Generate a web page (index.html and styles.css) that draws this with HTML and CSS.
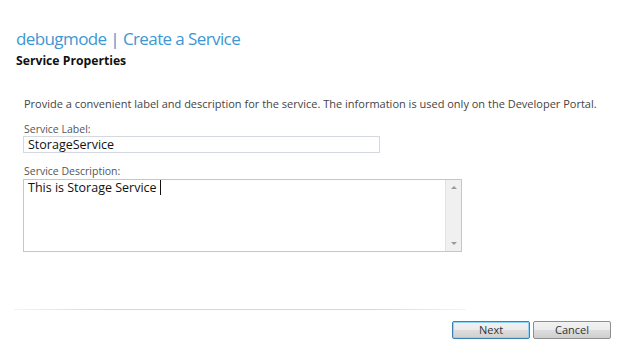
FILE: index.html
```html
<!DOCTYPE html>
<html lang="en">
<head>
    <meta charset="UTF-8">
    <title>debugmode | Create a Service</title>
    <link rel="stylesheet" href="styles.css">
</head>
<body>
    <div class="wizard">
        <h1 class="title">debugmode | Create a Service</h1>
        <h2 class="subtitle">Service Properties</h2>

        <div class="content">
            <p class="intro">Provide a convenient label and description for the service. The information is used only on the Developer Portal.</p>

            <label class="field-label" for="service-label">Service Label:</label>
            <div class="text-input" id="service-label">StorageService</div>

            <label class="field-label" for="service-desc">Service Description:</label>
            <div class="text-area" id="service-desc">
                <div class="text-area-body">This is Storage Service <span class="caret"></span></div>
                <div class="scrollbar">
                    <span class="arrow up"></span>
                    <span class="arrow down"></span>
                </div>
            </div>
        </div>

        <div class="divider"></div>

        <div class="actions">
            <button class="btn btn-primary">Next</button>
            <button class="btn">Cancel</button>
        </div>
    </div>
</body>
</html>
```

FILE: styles.css
```css
body {
    margin: 0;
    background-color: #ffffff;
    font-family: 'Open Sans', 'Noto Sans', sans-serif;
    color: #444444;
}

.wizard {
    width: 624px;
    height: 349px;
}

.title {
    margin: 0;
    padding: 27px 0 0 16px;
    font-family: 'Open Sans', sans-serif;
    font-size: 17px;
    font-weight: normal;
    letter-spacing: -0.6px;
    line-height: 24px;
    color: #3d97d2;
}

.subtitle {
    margin: 0;
    padding: 0 0 0 16px;
    font-size: 12.2px;
    font-weight: bold;
    line-height: 20px;
    color: #111111;
}

.content {
    padding: 25px 0 0 24px;
}

.intro {
    margin: 0 0 10px 0;
    font-size: 11px;
    line-height: 16px;
    color: #444444;
}

.field-label {
    display: block;
    font-size: 10.5px;
    line-height: 14px;
    color: #555555;
}

.text-input {
    box-sizing: border-box;
    width: 357px;
    height: 17px;
    margin: 0 0 11px -1px;
    padding: 0 4px;
    border: 1px solid #d4d9e0;
    font-size: 12.5px;
    line-height: 15px;
    color: #111111;
}

.text-area {
    box-sizing: border-box;
    display: flex;
    width: 439px;
    height: 73px;
    margin: 1px 0 0 -1px;
    border: 1px solid #bcc8d6;
}

.text-area-body {
    flex: 1;
    padding: 0 4px;
    font-size: 12.5px;
    line-height: 16px;
    color: #111111;
}

.caret {
    display: inline-block;
    width: 1px;
    height: 15px;
    background-color: #111111;
    vertical-align: -3px;
}

.scrollbar {
    width: 15px;
    background-color: #f0f0f0;
    border-left: 1px solid #e3e3e3;
    display: flex;
    flex-direction: column;
    justify-content: space-between;
    align-items: center;
    padding: 6px 0;
}

.arrow {
    width: 0;
    height: 0;
    border-left: 3px solid transparent;
    border-right: 3px solid transparent;
}

.arrow.up {
    border-bottom: 3px solid #9a9a9a;
}

.arrow.down {
    border-top: 3px solid #9a9a9a;
}

.divider {
    margin: 57px 0 0 14px;
    width: 452px;
    height: 1px;
    background: linear-gradient(to right, #f4f4f4, #d8d8d8 20%, #d8d8d8 80%, #f4f4f4);
}

.actions {
    display: flex;
    justify-content: flex-end;
    gap: 3px;
    padding: 11px 13px 0 0;
}

.btn {
    box-sizing: border-box;
    width: 78px;
    height: 18px;
    padding: 0;
    border: 1px solid #8e8f8f;
    border-radius: 2px;
    background: linear-gradient(to bottom, #f2f2f2, #ebebeb 50%, #dddddd 51%, #cfcfcf);
    font-family: 'Open Sans', 'Noto Sans', sans-serif;
    font-size: 11px;
    line-height: 16px;
    color: #333333;
}

.btn-primary {
    border-color: #3c7fb1;
    box-shadow: inset 0 0 0 1px #8fd3f6;
}
```
